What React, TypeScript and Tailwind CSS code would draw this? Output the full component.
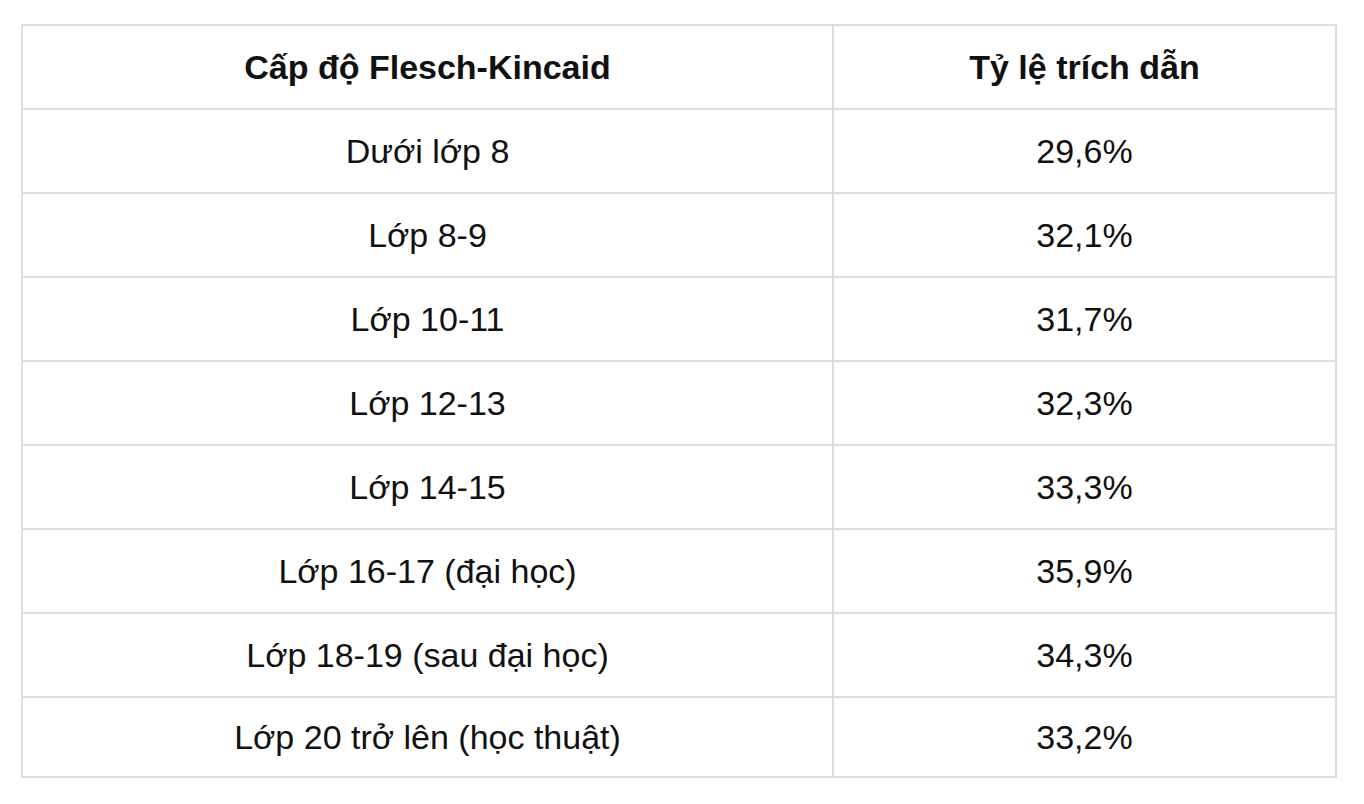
import React from 'react';

const rows: [string, string][] = [
  ['Dưới lớp 8', '29,6%'],
  ['Lớp 8-9', '32,1%'],
  ['Lớp 10-11', '31,7%'],
  ['Lớp 12-13', '32,3%'],
  ['Lớp 14-15', '33,3%'],
  ['Lớp 16-17 (đại học)', '35,9%'],
  ['Lớp 18-19 (sau đại học)', '34,3%'],
  ['Lớp 20 trở lên (học thuật)', '33,2%'],
];

export default function App() {
  return (
    <div className="min-h-screen bg-white pt-[24px] px-[21px] font-['Liberation_Sans',Arial,sans-serif] text-[#111111]">
      <table className="w-[1316px] border-collapse border-2 border-[#dedede]">
        <thead>
          <tr className="h-[84px]">
            <th className="w-[811px] border-2 border-[#dedede] text-[34px] font-bold text-center">
              Cấp độ Flesch-Kincaid
            </th>
            <th className="border-2 border-[#dedede] text-[34px] font-bold text-center">
              Tỷ lệ trích dẫn
            </th>
          </tr>
        </thead>
        <tbody>
          {rows.map(([level, rate], i) => (
            <tr key={level} className={i === rows.length - 1 ? 'h-[80px]' : 'h-[84px]'}>
              <td className="border-2 border-[#dedede] text-[34px] text-center">{level}</td>
              <td className="border-2 border-[#dedede] text-[34px] text-center">{rate}</td>
            </tr>
          ))}
        </tbody>
      </table>
    </div>
  );
}
